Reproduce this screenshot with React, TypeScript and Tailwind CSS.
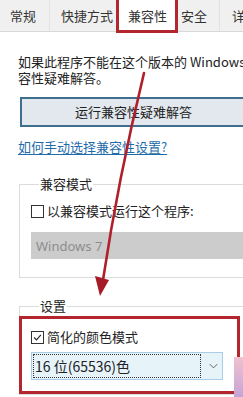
const tabs = [
  { label: '常规', cls: 'w-[50px] pl-[10px]' },
  { label: '快捷方式', cls: 'w-[67px] pl-[11px]' },
  { label: '兼容性', cls: 'w-[60px] pl-[11px] bg-white', active: true },
  { label: '安全', cls: 'w-[43px] pl-[4px]' },
  { label: '详细信息', cls: 'w-[80px] pl-[12px]' },
]

function CheckBox({ checked }: { checked?: boolean }) {
  return (
    <span className="flex h-[13px] w-[13px] shrink-0 items-center justify-center border border-[#333] bg-white">
      {checked && (
        <svg viewBox="0 0 13 13" className="h-[11px] w-[11px]" aria-hidden="true">
          <path d="M2.5 6.5l2.8 2.8L10.5 3.5" fill="none" stroke="#222" strokeWidth="1.3" />
        </svg>
      )}
    </span>
  )
}

export default function App() {
  return (
    <div className="relative h-[397px] w-[243px] overflow-hidden bg-white font-['Noto_Sans_CJK_SC','Noto_Sans',sans-serif] text-[13px] leading-[16px] text-[#222]">
      {/* tab strip */}
      <div className="flex h-[32px] w-[320px] border-b border-[#d9d9d9] bg-[#f0f0f0] text-[#333]">
        {tabs.map((t) => (
          <div
            key={t.label}
            className={`flex h-full shrink-0 items-center whitespace-nowrap border-r border-[#e2e2e2] ${t.cls}`}
          >
            {t.label}
          </div>
        ))}
      </div>

      <div className="w-[320px] pl-[18px] pt-[22px]">
        <p className="whitespace-nowrap">如果此程序不能在这个版本的 Windows 上正常工作，请尝试运行兼</p>
        <p className="whitespace-nowrap">容性疑难解答。</p>

        <div className="ml-[2px] mt-[11px] flex h-[30px] w-[290px] items-center border-2 border-[#3f6f8e] bg-[#e2e8ee]">
          <span className="ml-[53px]">运行兼容性疑难解答</span>
        </div>

        <p className="mt-[12px] whitespace-nowrap text-[#1f6cab] underline underline-offset-2">
          如何手动选择兼容性设置?
        </p>

        <fieldset className="ml-[1px] mt-[21px] border border-[#dcdcdc] pb-[18px] pl-[11px] pt-[11px]">
          <legend className="ml-[8px] px-[1px]">兼容模式</legend>
          <div className="flex h-[16px] items-center gap-[3px] whitespace-nowrap">
            <CheckBox />
            <span>以兼容模式运行这个程序:</span>
          </div>
          <div className="mt-[13px] flex h-[27px] items-center bg-[#cccccc] pl-[5px] font-['Noto_Sans',sans-serif] text-[#8c8c8c]">
            Windows 7
          </div>
        </fieldset>

        <fieldset className="ml-[1px] mt-[20px] border border-[#dcdcdc] pb-[14px] pl-[11px] pt-[15px]">
          <legend className="ml-[8px] px-[1px]">设置</legend>
          <div className="flex h-[16px] items-center gap-[3px] whitespace-nowrap">
            <CheckBox checked />
            <span>简化的颜色模式</span>
          </div>
          <div className="mt-[7px] flex h-[28px] w-[192px] items-center border border-[#a9cde6] bg-[#e6f3f9] p-[1px]">
            <div className="flex h-full w-[168px] items-center border border-dotted border-[#333] pl-[1px] text-[14px]">
              16 位(65536)色
            </div>
            <svg viewBox="0 0 12 8" className="ml-[8px] h-[6px] w-[9px]" aria-hidden="true">
              <path d="M1 1.5l5 5 5-5" fill="none" stroke="#555" strokeWidth="1.2" />
            </svg>
          </div>
        </fieldset>
      </div>

      {/* annotation overlays */}
      <div className="absolute left-[116px] top-[-3px] h-[36px] w-[62px] border-[3px] border-[#b3262e]" />
      <div className="absolute left-[19px] top-[316px] h-[78px] w-[221px] border-[3px] border-[#b3262e]" />
      <div className="absolute left-[234px] top-[357px] h-[40px] w-[9px] bg-gradient-to-b from-[#f0c2cf] to-[#c6a3d6]" />
      <svg className="pointer-events-none absolute left-0 top-0" width="243" height="397" viewBox="0 0 243 397" aria-hidden="true">
        <path d="M144 73 Q 118 180 103 280" fill="none" stroke="#b0202b" strokeWidth="2.6" strokeLinecap="round" />
        <polygon points="95,276 109,280 100,296" fill="#a51c28" />
      </svg>
    </div>
  )
}
